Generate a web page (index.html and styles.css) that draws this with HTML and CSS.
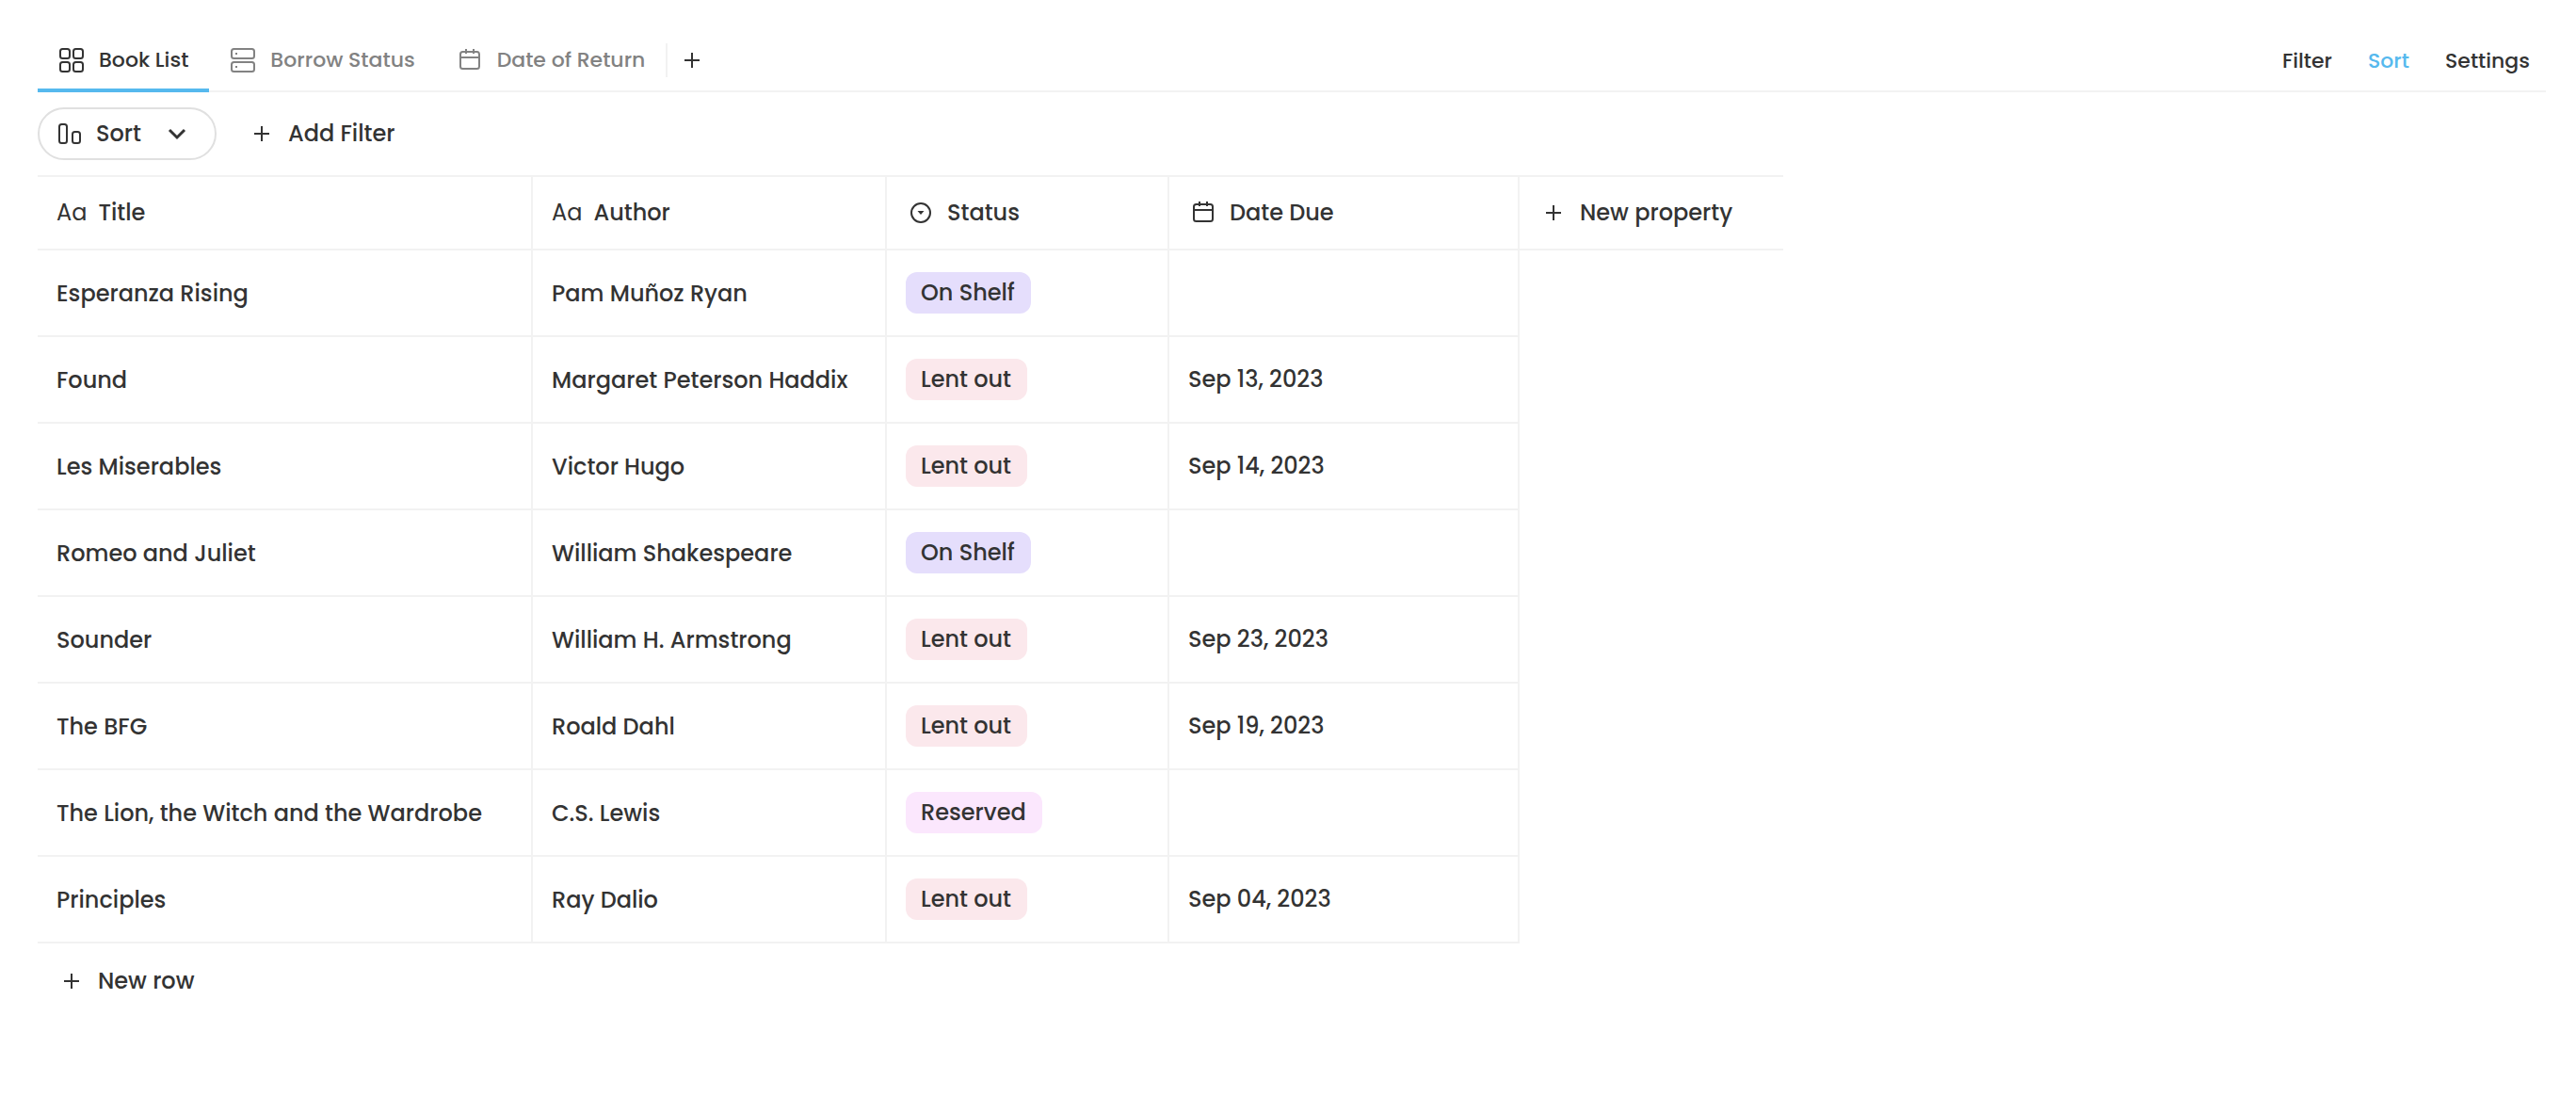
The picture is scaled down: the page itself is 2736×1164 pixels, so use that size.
FILE: index.html
```html
<!DOCTYPE html>
<html lang="en">
<head>
<meta charset="utf-8">
<meta name="viewport" content="width=device-width, initial-scale=1">
<title>Book List</title>
<link rel="stylesheet" href="styles.css">
</head>
<body>
<svg class="sprite" aria-hidden="true">
  <symbol id="icon-grid" viewBox="0 0 28 28"><rect x="2" y="2" width="10" height="10" rx="2.5"/><rect x="16" y="2" width="10" height="10" rx="2.5"/><rect x="2" y="16" width="10" height="10" rx="2.5"/><rect x="16" y="16" width="10" height="10" rx="2.5"/></symbol>
  <symbol id="icon-board" viewBox="0 0 28 28"><rect x="2" y="2" width="24" height="10" rx="2.5"/><rect x="2" y="16" width="24" height="10" rx="2.5"/><path d="M6 7h2M6 21h2"/></symbol>
  <symbol id="icon-calendar" viewBox="0 0 28 28"><rect x="4" y="5" width="20" height="18" rx="2.5"/><path d="M4 11h20M10 2v5M18 2v5"/></symbol>
  <symbol id="icon-plus" viewBox="0 0 28 28"><path d="M6 14h16M14 6v16"/></symbol>
  <symbol id="icon-sort" viewBox="0 0 28 28"><rect x="3" y="4" width="8" height="20" rx="2.5"/><rect x="17" y="12" width="8" height="12" rx="2.5"/></symbol>
  <symbol id="icon-chevron" viewBox="0 0 28 28"><path d="M6 10l8 8 8-8"/></symbol>
  <symbol id="icon-select" viewBox="0 0 28 28"><circle cx="14" cy="14" r="10"/><path class="solid" d="M10.500 12h7l-3.500 4z"/></symbol>
</svg>

<main class="database">
  <header class="views">
    <div class="tabs" role="tablist">
      <button class="tab tab-active" role="tab" aria-selected="true"><svg class="icon"><use href="#icon-grid"/></svg>Book List</button>
      <button class="tab" role="tab" aria-selected="false"><svg class="icon"><use href="#icon-board"/></svg>Borrow Status</button>
      <button class="tab" role="tab" aria-selected="false"><svg class="icon"><use href="#icon-calendar"/></svg>Date of Return</button>
    </div>
    <button class="add-view" aria-label="Add view"><svg class="icon"><use href="#icon-plus"/></svg></button>
    <div class="options">
      <button class="option">Filter</button>
      <button class="option option-active">Sort</button>
      <button class="option">Settings</button>
    </div>
  </header>

  <div class="toolbar">
    <button class="sort"><svg class="icon"><use href="#icon-sort"/></svg><span>Sort</span><svg class="icon chevron"><use href="#icon-chevron"/></svg></button>
    <button class="add-filter"><svg class="icon"><use href="#icon-plus"/></svg>Add Filter</button>
  </div>

  <table class="books">
    <colgroup><col class="col-title"><col class="col-author"><col class="col-status"><col class="col-due"><col class="col-new"></colgroup>
    <thead>
      <tr>
        <th scope="col"><div class="property"><span class="type-text" aria-hidden="true">Aa</span>Title</div></th>
        <th scope="col"><div class="property"><span class="type-text" aria-hidden="true">Aa</span>Author</div></th>
        <th scope="col"><div class="property property-icon"><svg class="icon"><use href="#icon-select"/></svg>Status</div></th>
        <th scope="col"><div class="property property-icon"><svg class="icon"><use href="#icon-calendar"/></svg>Date Due</div></th>
        <th scope="col"><button class="new-property"><svg class="icon"><use href="#icon-plus"/></svg>New property</button></th>
      </tr>
    </thead>
    <tbody>
      <tr><td class="text">Esperanza Rising</td><td class="text">Pam Muñoz Ryan</td><td><span class="tag tag-shelf">On Shelf</span></td><td></td></tr>
      <tr><td class="text">Found</td><td class="text">Margaret Peterson Haddix</td><td><span class="tag tag-lent">Lent out</span></td><td>Sep 13, 2023</td></tr>
      <tr><td class="text">Les Miserables</td><td class="text">Victor Hugo</td><td><span class="tag tag-lent">Lent out</span></td><td>Sep 14, 2023</td></tr>
      <tr><td class="text">Romeo and Juliet</td><td class="text">William Shakespeare</td><td><span class="tag tag-shelf">On Shelf</span></td><td></td></tr>
      <tr><td class="text">Sounder</td><td class="text">William H. Armstrong</td><td><span class="tag tag-lent">Lent out</span></td><td>Sep 23, 2023</td></tr>
      <tr><td class="text">The BFG</td><td class="text">Roald Dahl</td><td><span class="tag tag-lent">Lent out</span></td><td>Sep 19, 2023</td></tr>
      <tr><td class="text">The Lion, the Witch and the Wardrobe</td><td class="text">C.S. Lewis</td><td><span class="tag tag-reserved">Reserved</span></td><td></td></tr>
      <tr><td class="text">Principles</td><td class="text">Ray Dalio</td><td><span class="tag tag-lent">Lent out</span></td><td>Sep 04, 2023</td></tr>
    </tbody>
  </table>
  <button class="new-row"><svg class="icon"><use href="#icon-plus"/></svg>New row</button>
</main>
</body>
</html>
```

FILE: styles.css
```css
:root {
  --ink: #333;
  --muted: #828282;
  --rule: #f2f2f2;
  --accent: #56b9ee;
}

* { box-sizing: border-box; }

body {
  margin: 0;
  background: #fff;
  color: var(--ink);
  font: 500 24px/32px Poppins, Inter, sans-serif;
}

button {
  display: flex;
  align-items: center;
  padding: 0;
  border: 0;
  background: none;
  color: inherit;
  font: inherit;
  white-space: nowrap;
  cursor: pointer;
}

.sprite { position: absolute; width: 0; height: 0; }

.icon {
  flex: none;
  width: 28px;
  height: 28px;
  fill: none;
  stroke: currentColor;
  stroke-width: 2;
}

.solid { fill: currentColor; stroke: none; }

.database { padding: 34px 32px 40px 40px; }

.views {
  display: flex;
  align-items: flex-start;
  height: 64px;
  border-bottom: 2px solid var(--rule);
  font-size: 22px;
}

.tabs { display: flex; }

.tab {
  gap: 15px;
  height: 64px;
  padding: 0 22px;
  border-bottom: 4px solid transparent;
  color: var(--muted);
}

.tab-active {
  border-bottom-color: var(--accent);
  color: var(--ink);
}

.add-view {
  height: 36px;
  margin-top: 12px;
  padding-left: 12px;
  border-left: 2px solid var(--rule);
}

.options {
  display: flex;
  gap: 38px;
  height: 62px;
  margin-left: auto;
  padding-right: 17px;
}

.option-active { color: var(--accent); }

.toolbar {
  display: flex;
  align-items: center;
  gap: 34px;
  padding: 16px 0;
}

.sort {
  gap: 14px;
  height: 56px;
  padding: 0 26px 0 18px;
  border: 2px solid #e0e0e0;
  border-radius: 28px;
}

.chevron {
  margin-left: 10px;
  stroke-width: 3;
}

.add-filter { gap: 14px; }

.books {
  width: 1854px;
  table-layout: fixed;
  border-spacing: 0;
}

.col-title { width: 526px; }
.col-author { width: 376px; }
.col-status { width: 300px; }
.col-due { width: 372px; }
.col-new { width: 280px; }

.books th {
  height: 80px;
  padding: 0 20px;
  border: solid var(--rule);
  border-width: 2px 2px 2px 0;
  font-weight: 500;
  text-align: left;
}

.books th:last-child { border-right: 0; }

.books td {
  height: 92px;
  padding: 0 20px;
  border: solid var(--rule);
  border-width: 0 2px 2px 0;
  white-space: nowrap;
}

.books .text { padding-top: 2px; }

.property {
  display: flex;
  align-items: center;
  gap: 12px;
}

.property-icon { gap: 14px; padding-left: 2px; }

.type-text { font-size: 24px; font-weight: 400; }

.new-property { gap: 14px; padding-left: 2px; }

.tag {
  display: block;
  width: fit-content;
  padding: 6px 17px 6px 16px;
  border-radius: 12px;
}

.tag-shelf { background: #e5defc; }
.tag-lent { background: #fbe8ec; }
.tag-reserved { background: #fbe7fd; }

.new-row {
  gap: 14px;
  height: 80px;
  padding-left: 22px;
}
```
